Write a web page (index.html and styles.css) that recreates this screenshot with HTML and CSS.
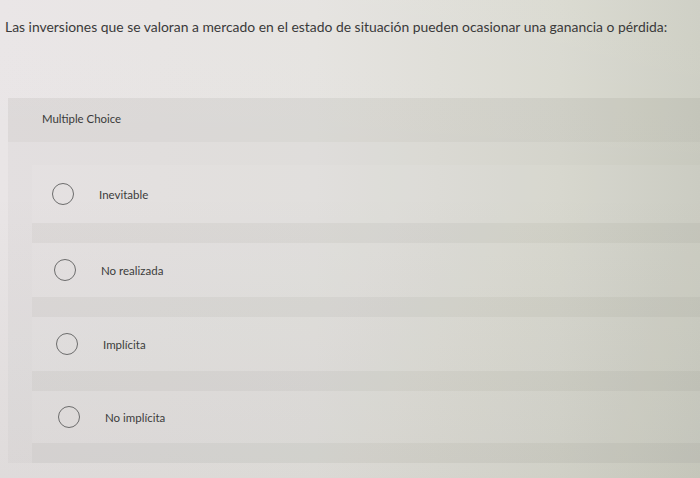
FILE: index.html
```html
<!DOCTYPE html>
<html lang="es">
<head>
<meta charset="utf-8">
<title>Multiple Choice</title>
<link rel="stylesheet" href="styles.css">
</head>
<body>
<p class="question">Las inversiones que se valoran a mercado en el estado de situación pueden ocasionar una ganancia o pérdida:</p>
<section class="panel">
  <div class="panel-head">Multiple Choice</div>
  <div class="options">
    <label class="option"><span class="radio"></span><span class="label">Inevitable</span></label>
    <label class="option"><span class="radio"></span><span class="label">No realizada</span></label>
    <label class="option"><span class="radio"></span><span class="label">Implícita</span></label>
    <label class="option"><span class="radio"></span><span class="label">No implícita</span></label>
  </div>
</section>
</body>
</html>
```
FILE: styles.css
```css
html, body {
  margin: 0;
  padding: 0;
  height: 100%;
}
body {
  font-family: Lato, "Open Sans", sans-serif;
  color: #3a3a3a;
  background:
    linear-gradient(180deg, rgba(255,255,255,0.05) 0%, rgba(0,0,0,0) 40%, rgba(60,60,40,0.06) 100%),
    linear-gradient(90deg, #e9e5e6 0%, #e5e3e0 45%, #d9d9d0 80%, #cdcec3 100%);
  overflow: hidden;
}
.question {
  margin: 0;
  padding: 18px 0 0 5px;
  font-size: 13.9px;
  line-height: 18px;
}
.panel {
  margin: 62px 0 0 8px;
}
.panel-head {
  height: 40px;
  padding: 0 0 4px 34px;
  display: flex;
  align-items: center;
  font-size: 11.4px;
  background: rgba(70, 70, 60, 0.07);
}
.options {
  padding-top: 23px;
  display: flex;
  flex-direction: column;
  background: rgba(70, 70, 60, 0.03);
}
.option {
  height: 54px;
  margin-left: 24px;
  display: flex;
  align-items: center;
  gap: 25px;
  font-size: 11.5px;
  background: rgba(255, 255, 255, 0.07);
  border-bottom: 20px solid rgba(70, 70, 60, 0.05);
}
.option:nth-child(1) { height: 58px; padding-left: 20px; }
.option:nth-child(2) { padding-left: 22px; }
.option:nth-child(3) { padding-left: 24px; }
.option:nth-child(4) { height: 52px; padding-left: 26px; }
.radio {
  width: 20px;
  height: 20px;
  border: 1.2px solid #6c6c6c;
  border-radius: 50%;
  flex: none;
}
.label {
  color: #3c3c3c;
}
```
